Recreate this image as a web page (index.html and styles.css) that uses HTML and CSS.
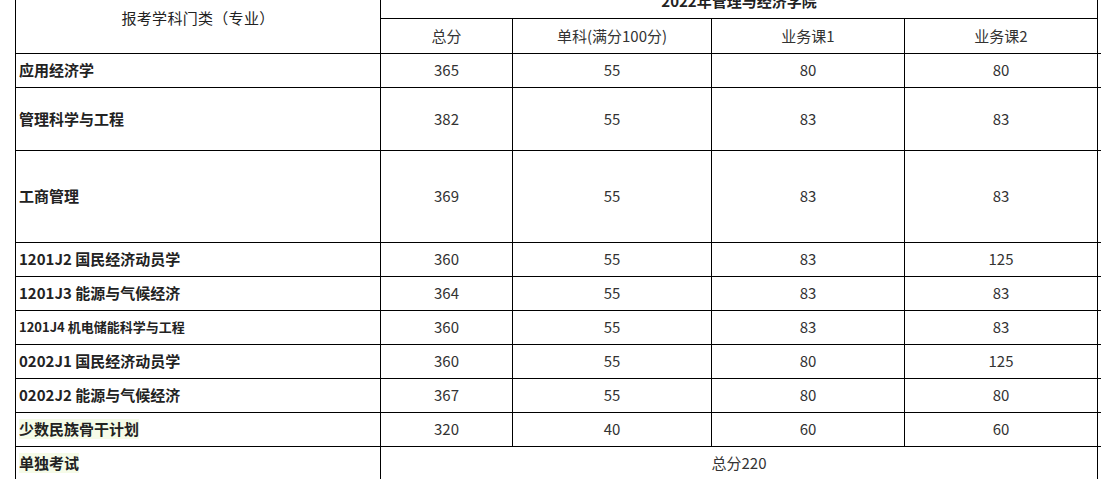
FILE: index.html
```html
<!DOCTYPE html>
<html lang="zh-CN">
<head>
<meta charset="utf-8">
<title>2022年管理与经济学院 复试分数线</title>
<link rel="stylesheet" href="styles.css">
</head>
<body>
<div class="sheet">
  <div class="cell head-major">报考学科门类（专业）</div>
  <div class="cell head-college">2022年管理与经济学院</div>
  <div class="cell ext ext-top"></div>

  <div class="cell c">总分</div>
  <div class="cell c">单科(满分100分)</div>
  <div class="cell c">业务课1</div>
  <div class="cell c">业务课2</div>
  <div class="cell ext ext-sub"></div>

  <div class="cell lbl">应用经济学</div>
  <div class="cell c">365</div><div class="cell c">55</div><div class="cell c">80</div><div class="cell c">80</div><div class="cell ext"></div>

  <div class="cell lbl">管理科学与工程</div>
  <div class="cell c">382</div><div class="cell c">55</div><div class="cell c">83</div><div class="cell c">83</div><div class="cell ext"></div>

  <div class="cell lbl">工商管理</div>
  <div class="cell c">369</div><div class="cell c">55</div><div class="cell c">83</div><div class="cell c">83</div><div class="cell ext"></div>

  <div class="cell lbl">1201J2 国民经济动员学</div>
  <div class="cell c">360</div><div class="cell c">55</div><div class="cell c">83</div><div class="cell c">125</div><div class="cell ext"></div>

  <div class="cell lbl">1201J3 能源与气候经济</div>
  <div class="cell c">364</div><div class="cell c">55</div><div class="cell c">83</div><div class="cell c">83</div><div class="cell ext"></div>

  <div class="cell lbl small">1201J4 机电储能科学与工程</div>
  <div class="cell c">360</div><div class="cell c">55</div><div class="cell c">83</div><div class="cell c">83</div><div class="cell ext"></div>

  <div class="cell lbl">0202J1 国民经济动员学</div>
  <div class="cell c">360</div><div class="cell c">55</div><div class="cell c">80</div><div class="cell c">125</div><div class="cell ext"></div>

  <div class="cell lbl">0202J2 能源与气候经济</div>
  <div class="cell c">367</div><div class="cell c">55</div><div class="cell c">80</div><div class="cell c">80</div><div class="cell ext"></div>

  <div class="cell lbl"><span class="mark">少数民族骨干计划</span></div>
  <div class="cell c">320</div><div class="cell c">40</div><div class="cell c">60</div><div class="cell c">60</div><div class="cell ext"></div>

  <div class="cell lbl"><span class="mark">单独考试</span></div>
  <div class="cell c span4">总分220</div>
  <div class="cell ext"></div>
</div>
</body>
</html>
```
FILE: styles.css
```css
html, body {
  margin: 0;
  padding: 0;
  overflow: hidden;
  background: #fff;
}
body {
  font-family: "Noto Sans CJK SC", "Noto Sans", sans-serif;
  color: #333;
}
.sheet {
  display: grid;
  grid-template-columns: 365px 132px 199px 193px 193px 40px;
  grid-template-rows: 35px 35px 34px 63px 92px 34px 34px 34px 34px 34px 34px 34px;
  margin: -17px 0 0 15px;
  border-left: 1px solid #000;
  border-top: 1px solid #000;
  width: max-content;
}
.cell {
  box-sizing: border-box;
  border-right: 1px solid #000;
  border-bottom: 1px solid #000;
  display: flex;
  align-items: center;
  font-size: 15px;
  line-height: 20px;
  padding-bottom: 1px;
  white-space: nowrap;
}
.c {
  justify-content: center;
}
.head-major {
  grid-row: span 2;
  justify-content: center;
  padding-bottom: 2px;
  color: #222;
  letter-spacing: 0.3px;
}
.head-college {
  grid-column: span 4;
  justify-content: center;
  font-weight: 700;
  color: #222;
}
.span4 {
  grid-column: span 4;
}
.lbl {
  padding-left: 3px;
  font-weight: 700;
  color: #222;
}
.lbl.small {
  font-size: 13px;
}
.mark {
  background: #f5fbe8;
}
.ext {
  border-right: none;
}
.ext-top {
  border-bottom: none;
}
```
